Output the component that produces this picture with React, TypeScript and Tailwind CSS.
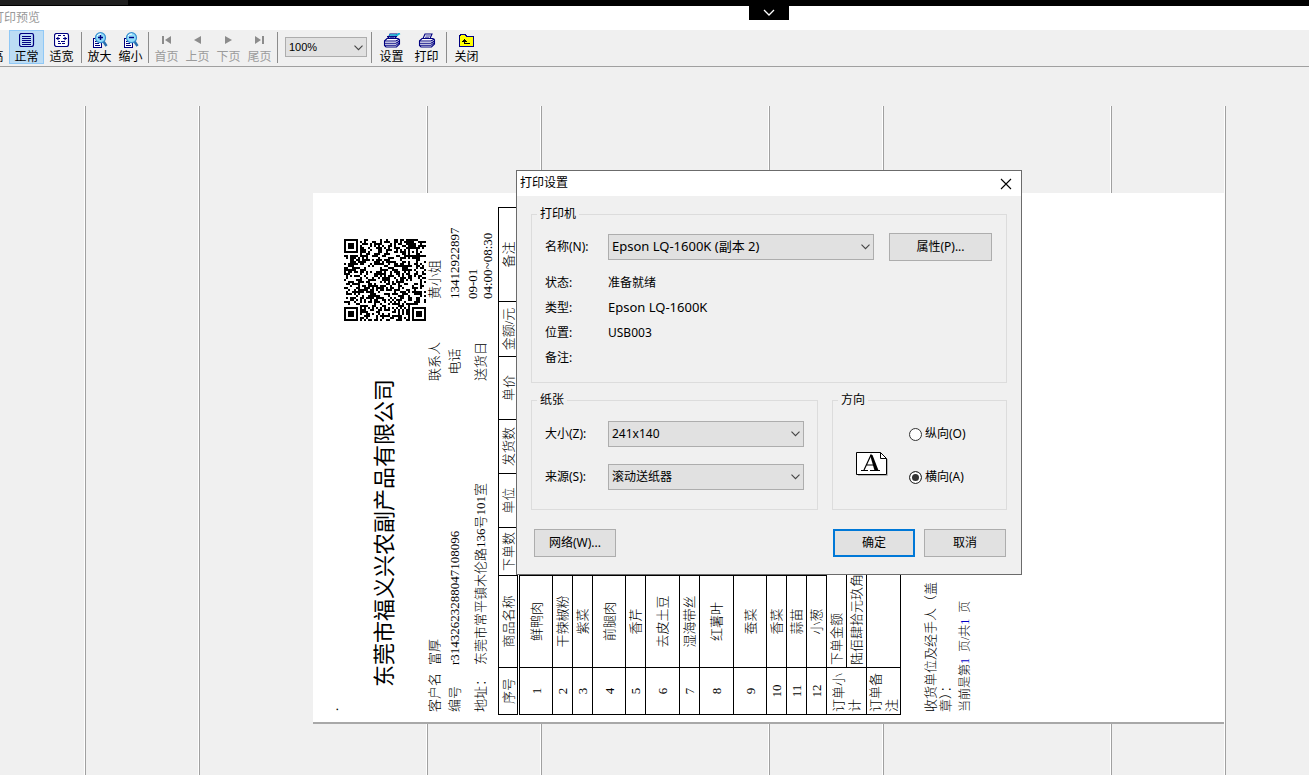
import React, { useId, useState } from "react";

const NAVY = "#000080";

/* ---------- toolbar icons ---------- */

function NormalIcon() {
  return (
    <svg width="16" height="14" viewBox="0 0 16 14" fill="none" stroke={NAVY}>
      <rect x="0.5" y="0.5" width="14" height="13" rx="2" strokeWidth="1.2" />
      <path d="M3 3.5h9M3 5.5h9M3 7.5h9M3 9.5h9M3 11.5h9" shapeRendering="crispEdges" />
    </svg>
  );
}

function FitIcon() {
  return (
    <svg width="16" height="14" viewBox="0 0 16 14" fill="none" stroke={NAVY}>
      <rect x="0.5" y="0.5" width="14" height="13" rx="2" fill="#fff" strokeWidth="1.2" />
      <path d="M4 2.5h3M9 2.5h2M4 8.5h2M7 8.5h4M4 10.5h3M8 10.5h3" shapeRendering="crispEdges" />
      <path d="M2 5.500h4M9 5.500h4" shapeRendering="crispEdges" />
      <path d="M2 5.500l2.500-2v4zM13 5.500l-2.500-2v4z" fill={NAVY} stroke="none" />
    </svg>
  );
}

function ZoomGlyph({ plus }: { plus: boolean }) {
  return (
    <svg width="16" height="17" viewBox="0 0 16 17" fill="none">
      <path d="M1.5 6.5h8v9h-8z" fill="#fff" stroke={NAVY} shapeRendering="crispEdges" />
      <path d="M3 9.5h4M3 11.5h4M3 13.5h5" stroke={NAVY} shapeRendering="crispEdges" />
      <path d="M11.500 9.500l3 4.500" stroke="#2a6fb0" strokeWidth="2.500" />
      <circle cx="8.500" cy="5.700" r="5" fill="#8fdcfa" stroke="#3a8fd0" strokeWidth="1.200" />
      <path d="M5 4a4.500 4.500 0 0 1 4-2" stroke="#fff" />
      <path d={plus ? "M6 5.500h5M8.500 3v5" : "M6 5.500h5"} stroke={NAVY} strokeWidth="1.400" />
    </svg>
  );
}

function NavIcon({ kind }: { kind: "first" | "prev" | "next" | "last" }) {
  const shapes = {
    first: "M1 1h2v8H1zM10 1v8L4 5z",
    prev: "M9 1v8L2 5z",
    next: "M2 1v8l7-4z",
    last: "M1 1v8l6-4zM8 1h2v8H8z",
  };
  return (
    <svg width="11" height="10" viewBox="0 0 11 10" fill="#8c8c8c">
      <path d={shapes[kind]} />
    </svg>
  );
}

function PrinterIcon({ setup }: { setup?: boolean }) {
  return (
    <svg width="18" height="15" viewBox="0 0 18 15" fill="none" stroke={NAVY} strokeWidth="1.100">
      <path d="M5 5.500L7 1h7l-2 4.500" fill="#fff" />
      <path d="M7.500 3h5M7 4.800h4" strokeWidth="0.800" />
      <path d="M1.500 8L4 5.500h11L16.500 7v4l-3 3H3l-1.500-1.500z" fill="#fff" />
      <path d="M1.500 8H13l3.500-2M1.500 10.300H13L16.500 8M2 12.300h11l3-2.500" />
      {setup && <path d="M6 2h8l3-1.500M13 3.500l3.500-3" stroke="#16b4d8" strokeWidth="1.600" />}
      {setup && <path d="M4 3.700h10" strokeWidth="1.300" />}
    </svg>
  );
}

function CloseFolderIcon() {
  return (
    <svg width="16" height="13" viewBox="0 0 16 13" fill="none" shapeRendering="crispEdges">
      <path d="M0.500 2.500l1-2h5l1 2h7v10h-14z" fill="#ffff00" stroke={NAVY} />
      <path d="M5.500 5v5M4 6.500h3M3 7.500h5M5 9.500h6" stroke="#000" />
    </svg>
  );
}

function Chevron({ className }: { className?: string }) {
  return (
    <svg className={className} width="9" height="6" viewBox="0 0 9 6" fill="none" stroke="#444" strokeWidth="1.100">
      <path d="M0.500 0.700l4 4 4-4" />
    </svg>
  );
}

/* ---------- toolbar ---------- */

type ToolProps = { label: string; icon: React.ReactNode; wide?: boolean; active?: boolean; disabled?: boolean; className?: string };

function Tool({ label, icon, wide, active, disabled, className = "" }: ToolProps) {
  return (
    <button
      type="button"
      disabled={disabled}
      className={`flex h-[34px] shrink-0 flex-col items-center whitespace-nowrap border ${wide ? "w-[35px]" : "w-[31px]"} ${
        active ? "border-[#90c8f6] bg-[#bcdcf4]" : "border-transparent"
      } ${disabled ? "text-[#9b9b9b]" : "text-black"} ${className}`}
    >
      <span className="flex h-[18px] items-center justify-center">{icon}</span>
      <span className="leading-[14px]">{label}</span>
    </button>
  );
}

function Divider() {
  return <span className="mx-[2px] mt-[2px] h-[31px] w-px shrink-0 bg-[#8c8c8c]" />;
}

function Toolbar() {
  return (
    <div className="flex h-[37px] items-start overflow-hidden border-b border-[#a0a0a0] text-[12px]">
      <Tool label="适高" icon={<FitIcon />} wide className="-ml-[26px]" />
      <Tool label="正常" icon={<NormalIcon />} wide active />
      <Tool label="适宽" icon={<FitIcon />} wide />
      <Divider />
      <Tool label="放大" icon={<ZoomGlyph plus />} />
      <Tool label="缩小" icon={<ZoomGlyph plus={false} />} />
      <Divider />
      <Tool label="首页" icon={<NavIcon kind="first" />} disabled />
      <Tool label="上页" icon={<NavIcon kind="prev" />} disabled />
      <Tool label="下页" icon={<NavIcon kind="next" />} disabled />
      <Tool label="尾页" icon={<NavIcon kind="last" />} disabled />
      <Divider />
      <div className="relative ml-[5px] mr-[2px] mt-[7px] w-[82px] shrink-0">
        <select
          aria-label="缩放"
          className="h-[20px] w-full appearance-none border border-[#adadad] bg-[#e1e1e1] pl-[3px] font-['Liberation_Sans','Noto_Sans_CJK_SC',sans-serif] text-[11px] text-black"
        >
          <option>100%</option>
        </select>
        <Chevron className="pointer-events-none absolute right-1 top-2" />
      </div>
      <Divider />
      <Tool label="设置" icon={<PrinterIcon setup />} wide />
      <Tool label="打印" icon={<PrinterIcon />} wide />
      <Divider />
      <Tool label="关闭" icon={<CloseFolderIcon />} wide />
    </div>
  );
}

/* ---------- QR code ---------- */

const QR_SIZE = 41;

function qrPath() {
  const finders = [
    [0, 0],
    [QR_SIZE - 7, 0],
    [0, QR_SIZE - 7],
  ];
  let seed = 20230901;
  let d = "";
  for (let y = 0; y < QR_SIZE; y++) {
    for (let x = 0; x < QR_SIZE; x++) {
      seed = (seed * 1103515245 + 12345) % 2147483648;
      let dark = (seed >> 12) % 100 < 50;
      if (x === 6 || y === 6) dark = (x + y) % 2 === 0;
      const ar = Math.max(Math.abs(x - 34), Math.abs(y - 34));
      if (ar <= 2) dark = ar !== 1;
      for (const [fx, fy] of finders) {
        const r = Math.max(Math.abs(x - fx - 3), Math.abs(y - fy - 3));
        if (r <= 4) dark = r !== 4 && r !== 2;
      }
      if (dark) d += `M${x} ${y}h1v1h-1z`;
    }
  }
  return d;
}

const QR_PATH = qrPath();

function QrCode() {
  return (
    <svg width="82" height="82" viewBox="0 0 41 41" shapeRendering="crispEdges" role="img" aria-label="二维码">
      <path d={QR_PATH} fill="#000" />
    </svg>
  );
}

/* ---------- delivery note ---------- */

const HEADERS = [
  { text: "序号", w: "w-[47px]" },
  { text: "商品名称", w: "w-[92px]" },
  { text: "下单数", w: "w-[48px]" },
  { text: "单位", w: "w-[54px]" },
  { text: "发货数", w: "w-[54px]" },
  { text: "单价", w: "w-[63px]" },
  { text: "金额/元", w: "w-[55px]" },
  { text: "备注", w: "" },
];

const ITEMS = [
  { name: "鲜鸭肉", h: "h-[34px]" },
  { name: "干辣椒粉", h: "h-[20px]" },
  { name: "紫菜", h: "h-[20px]" },
  { name: "前腿肉", h: "h-[33px]" },
  { name: "香芹", h: "h-[20px]" },
  { name: "去皮土豆", h: "h-[34px]" },
  { name: "湿海带丝", h: "h-[20px]" },
  { name: "红薯叶", h: "h-[34px]" },
  { name: "蚕菜", h: "h-[33px]" },
  { name: "香菜", h: "h-[20px]" },
  { name: "蒜苗", h: "h-[20px]" },
  { name: "小葱", h: "h-[20px]" },
];

function DeliveryNote() {
  return (
    <article className="mt-[529px] w-[529px] shrink-0 origin-top-left -rotate-90 font-['Liberation_Serif','Noto_Sans_CJK_SC',serif] text-[13px] font-light leading-[15px] text-black">
      <p className="h-[31px] pl-[11px] pt-1 leading-[34px]">.</p>
      <header className="flex items-center justify-between pl-[35px] pr-[46px]">
        <h1 className="text-[22px] font-normal leading-7">东莞市福义兴农副产品有限公司</h1>
        <QrCode />
      </header>

      <dl className="-mt-[2px] grid grid-cols-[47px_284px_39px_1fr] grid-rows-[20px_20px_32px] items-center pb-[2px] pl-[10px]">
        <dt>客户名</dt>
        <dd>富厚</dd>
        <dt className="text-center">联系人</dt>
        <dd className="pl-[43px]">黄小姐</dd>
        <dt>编号</dt>
        <dd>r31432623288047108096</dd>
        <dt className="text-center">电话</dt>
        <dd className="pl-[43px]">13412922897</dd>
        <dt>地址：</dt>
        <dd>东莞市常平镇木伦路136号101室</dd>
        <dt className="text-center">送货日</dt>
        <dd className="pl-[43px]">
          09-01
          <br />
          04:00~08:30
        </dd>
      </dl>

      <table className="ml-[7px] w-[508px] table-fixed border-collapse border border-black text-center">
        <thead>
          <tr className="h-[20px]">
            {HEADERS.map((h) => (
              <th key={h.text} className={`whitespace-nowrap border border-b-[3px] border-black p-0 font-light [border-bottom-style:double] ${h.w}`}>
                {h.text}
              </th>
            ))}
          </tr>
        </thead>
        <tbody>
          {ITEMS.map((item, i) => (
            <tr key={item.name} className={item.h}>
              <td className="border border-black p-0">{i + 1}</td>
              <td className="border border-black p-0">{item.name}</td>
              <td className="border border-black p-0" />
              <td className="border border-black p-0" />
              <td className="border border-black p-0" />
              <td className="border border-black p-0" />
              <td className="border border-black p-0" />
              <td className="border border-black p-0" />
            </tr>
          ))}
          <tr className="h-[20px] text-left">
            <td rowSpan={2} className="border border-black py-0 pl-[2px] pr-0 leading-4">订单小计</td>
            <td colSpan={7} className="border border-black py-0 pl-[2px] pr-0">下单金额</td>
          </tr>
          <tr className="h-[20px] text-left">
            <td colSpan={7} className="border border-black py-0 pl-[2px] pr-0">陆佰肆拾元玖角</td>
          </tr>
          <tr className="h-[34px] text-left">
            <td className="border border-black py-0 pl-[2px] pr-0 leading-4">订单备注</td>
            <td colSpan={7} className="border border-black p-0" />
          </tr>
        </tbody>
      </table>

      <footer className="pl-[10px] pt-[22px]">
        <p className="w-[138px]">收货单位及经手人（盖章）：</p>
        <p className="text-[12px] leading-6">
          当前是第<b className="text-[#0000c8]">1</b>&nbsp;&nbsp;页/共<b className="text-[#0000c8]">1</b>&nbsp;&nbsp;页
        </p>
      </footer>
    </article>
  );
}

/* Page guides that run behind the sheet on the preview canvas. */
const GUIDES = ["w-[86px]", "w-[114px]", "w-[228px]", "w-[114px]", "w-[228px]", "w-[114px]", "w-[228px]", "w-[114px]"];

function Preview() {
  return (
    <main className="relative flex-1 overflow-hidden">
      <div className="absolute inset-x-0 bottom-0 top-[39px] flex" aria-hidden="true">
        {GUIDES.map((w, i) => (
          <span key={i} className={`shrink-0 border-r border-[#a0a0a0] shadow-[inset_-1px_0_0_#fff] ${w}`} />
        ))}
      </div>
      <div className="relative ml-[313px] mt-[126px] flex h-[531px] w-[911px] items-start overflow-hidden border-b-2 border-[#a8a8a8] bg-white">
        <DeliveryNote />
      </div>
    </main>
  );
}

/* ---------- print dialog ---------- */

function Combo({ id, value, className }: { id: string; value: string; className: string }) {
  return (
    <div className={`relative ${className}`}>
      <select id={id} className="h-[26px] w-full appearance-none border border-[#adadad] bg-[#e1e1e1] pl-[3px] pr-5">
        <option>{value}</option>
      </select>
      <Chevron className="pointer-events-none absolute right-1 top-[10px]" />
    </div>
  );
}

function DialogButton({ children, primary, className = "w-[82px]" }: { children: React.ReactNode; primary?: boolean; className?: string }) {
  return (
    <button type="button" className={`h-[28px] bg-[#e1e1e1] ${primary ? "border-2 border-[#0078d7]" : "border border-[#adadad]"} ${className}`}>
      {children}
    </button>
  );
}

function Group({ title, className = "", children }: { title: string; className?: string; children: React.ReactNode }) {
  return (
    <fieldset className={`min-w-0 border border-[#dcdcdc] px-[5px] ${className}`}>
      <legend className="px-[3px] leading-4">{title}</legend>
      {children}
    </fieldset>
  );
}

function OrientationIcon() {
  return (
    <svg width="33" height="25" viewBox="0 0 33 25">
      <path d="M2 23.500h29.500V7" fill="none" stroke="#b8b8b8" />
      <path d="M0.500 0.500h24l6 6v16h-30z" fill="#fff" stroke="#000" />
      <path d="M24.500 0.500v6h6" fill="none" stroke="#000" />
      <path d="M5 18.500h7M14 18.500h10M8 18L15 3l6 15M10.500 13h8" fill="none" stroke="#000" strokeWidth="1.200" />
      <path d="M14 3h2.500l6 15.500h-4z" fill="#000" />
    </svg>
  );
}

const INFO = [
  ["状态:", "准备就绪", ""],
  ["类型:", "Epson LQ-1600K", "text-[13px]"],
  ["位置:", "USB003", ""],
  ["备注:", "", ""],
];

function PrintDialog() {
  const id = useId();
  const [landscape, setLandscape] = useState(true);
  const radio =
    "size-[13px] appearance-none rounded-full border border-[#333] bg-white checked:bg-[#333] checked:shadow-[inset_0_0_0_2px_#fff]";
  return (
    <section
      role="dialog"
      aria-labelledby={`${id}-title`}
      className="absolute left-[516px] top-[170px] w-[506px] border border-[#6b6b6b] bg-[#f0f0f0] font-['Noto_Sans','Noto_Sans_CJK_SC',sans-serif] text-[12px] text-black"
    >
      <header className="flex h-[25px] items-center justify-between bg-white pl-[3px] pr-[9px]">
        <h2 id={`${id}-title`} className="pb-[2px]">打印设置</h2>
        <button type="button" aria-label="关闭">
          <svg width="12" height="12" viewBox="0 0 12 12" stroke="#000" strokeWidth="1.100">
            <path d="M1 1l10 10M11 1L1 11" />
          </svg>
        </button>
      </header>

      <div className="px-[14px] pb-[17px] pt-[10px]">
        <Group title="打印机" className="pb-[12px]">
          <div className="flex items-center pl-2 pt-[11px]">
            <label htmlFor={`${id}-name`} className="w-[63px]">名称(N):</label>
            <Combo id={`${id}-name`} value="Epson LQ-1600K (副本 2)" className="w-[266px] text-[13px]" />
            <DialogButton className="ml-[15px] w-[103px]">属性(P)...</DialogButton>
          </div>
          <dl className="grid grid-cols-[63px_1fr] pl-2 pt-[9px] leading-[25px]">
            {INFO.map(([k, v, size]) => (
              <React.Fragment key={k}>
                <dt>{k}</dt>
                <dd className={size}>{v}</dd>
              </React.Fragment>
            ))}
          </dl>
        </Group>

        <div className="mt-[9px] flex gap-[14px]">
          <Group title="纸张" className="w-[287px] pb-[19px]">
            <div className="grid grid-cols-[63px_1fr] items-center gap-y-[17px] pl-2 pr-2 pt-[13px]">
              <label htmlFor={`${id}-size`}>大小(Z):</label>
              <Combo id={`${id}-size`} value="241x140" className="w-[196px]" />
              <label htmlFor={`${id}-source`}>来源(S):</label>
              <Combo id={`${id}-source`} value="滚动送纸器" className="w-[196px]" />
            </div>
          </Group>
          <Group title="方向" className="flex-1">
            <div className="flex items-center gap-5 pl-[18px] pt-[13px]">
              <span className="pt-[17px]">
                <OrientationIcon />
              </span>
              <div className="flex flex-col gap-[17px]">
                <label className="flex h-[26px] items-center gap-[3px]">
                  <input type="radio" name={`${id}-dir`} className={radio} checked={!landscape} onChange={() => setLandscape(false)} />
                  纵向(O)
                </label>
                <label className="flex h-[26px] items-center gap-[3px]">
                  <input type="radio" name={`${id}-dir`} className={radio} checked={landscape} onChange={() => setLandscape(true)} />
                  横向(A)
                </label>
              </div>
            </div>
          </Group>
        </div>

        <div className="mt-[19px] flex gap-[9px] pl-[3px] pr-px">
          <DialogButton>网络(W)...</DialogButton>
          <span className="flex-1" />
          <DialogButton primary>确定</DialogButton>
          <DialogButton>取消</DialogButton>
        </div>
      </div>
    </section>
  );
}

/* ---------- page ---------- */

export default function App() {
  return (
    <div className="relative flex min-h-screen flex-col overflow-hidden bg-[#f0f0f0] font-['Noto_Sans_CJK_SC',sans-serif]">
      <div className="flex h-[6px] bg-black">
        <span className="h-[5px] w-32 bg-[#1f1f1f]" />
      </div>
      <button type="button" aria-label="展开" className="absolute left-[749px] top-0 flex h-[20px] w-[40px] items-center justify-center bg-black pt-1">
        <svg width="12" height="7" viewBox="0 0 12 7" fill="none" stroke="#fff" strokeWidth="1.300">
          <path d="M1 1l5 5 5-5" />
        </svg>
      </button>
      <div className="flex h-6 items-center bg-white pb-[2px] text-[12px] text-[#999]">
        <h1 className="-ml-2">打印预览</h1>
      </div>
      <Toolbar />
      <Preview />
      <PrintDialog />
    </div>
  );
}
